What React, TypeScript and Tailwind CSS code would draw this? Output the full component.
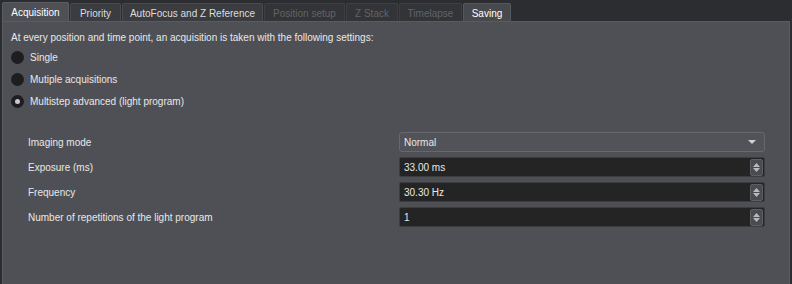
import React, { useState } from 'react';

const tabs = [
  { label: 'Acquisition', state: 'active', w: 'w-[67px]' },
  { label: 'Priority', state: 'normal', w: 'w-[51px]' },
  { label: 'AutoFocus and Z Reference', state: 'normal', w: 'w-[141px]' },
  { label: 'Position setup', state: 'disabled', w: 'w-[81px]' },
  { label: 'Z Stack', state: 'disabled', w: 'w-[52px]' },
  { label: 'Timelapse', state: 'disabled', w: 'w-[63px]' },
  { label: 'Saving', state: 'hover', w: 'w-[48px]' },
];

const modes = ['Single', 'Mutiple acquisitions', 'Multistep advanced (light program)'];

const SpinArrows: React.FC = () => (
  <div className="flex flex-col justify-center gap-[1px] w-[13px] h-[17px] bg-[#4a4b50] border border-[#5d5e63] rounded-[2px] items-center">
    <svg width="7" height="4" viewBox="0 0 7 4"><path d="M0 4 L3.5 0 L7 4 Z" fill="#b8b9bd" /></svg>
    <svg width="7" height="4" viewBox="0 0 7 4"><path d="M0 0 L3.5 4 L7 0 Z" fill="#b8b9bd" /></svg>
  </div>
);

const SpinBox: React.FC<{ value: string }> = ({ value }) => (
  <div className="flex items-center h-[20px] bg-[#242424] border border-[#3c3d40] rounded-[2px] pl-[4px] pr-[1px]">
    <span className="flex-1">{value}</span>
    <SpinArrows />
  </div>
);

const App: React.FC = () => {
  const [mode, setMode] = useState(2);

  return (
    <div
      className="w-[792px] h-[284px] bg-[#2c2d30] flex flex-col text-[10px] text-[#e8e8e8] overflow-hidden"
      style={{ fontFamily: '"Liberation Sans", Arial, sans-serif' }}
    >
      <div className="flex gap-[1px] pl-[2px] pt-[2px] h-[21px]">
        {tabs.map(t => (
          <div
            key={t.label}
            className={
              t.w +
              ' flex items-center justify-center whitespace-nowrap rounded-t-[2px] border border-b-0 ' +
              (t.state === 'active'
                ? 'bg-[#4f5055] border-[#5c5d62] text-white h-[20px]'
                : t.state === 'hover'
                ? 'bg-[#48494d] border-[#57585c] text-white h-[19px] mt-[1px]'
                : t.state === 'disabled'
                ? 'bg-[#333437] border-[#3e3f42] text-[#626367] h-[19px] mt-[1px]'
                : 'bg-[#3b3c40] border-[#494a4e] text-[#dcdcdc] h-[19px] mt-[1px]')
            }
          >
            {t.label}
          </div>
        ))}
      </div>
      <div className="flex-1 mx-[2px] bg-[#4f5055] border border-[#5a5b60] border-b-0 pl-[8px] pr-[24px]">
        <div className="mt-[8px]">
          At every position and time point, an acquisition is taken with the following settings:
        </div>
        <div className="flex flex-col mt-[5px] gap-[8px]">
          {modes.map((m, i) => (
            <label key={m} className="flex items-center gap-[6px] h-[14px] cursor-pointer" onClick={() => setMode(i)}>
              <span className="w-[13px] h-[13px] rounded-full bg-[#1e1e20] flex items-center justify-center">
                {mode === i && <span className="w-[5px] h-[5px] rounded-full bg-[#c9c9cb]" />}
              </span>
              <span>{m}</span>
            </label>
          ))}
        </div>
        <div className="grid grid-cols-[371px_1fr] mt-[24px] pl-[17px] gap-y-[5px] items-center">
          <span>Imaging mode</span>
          <div className="flex items-center h-[20px] bg-[#525358] border border-[#67686d] rounded-[3px] pl-[4px] pr-[8px]">
            <span className="flex-1">Normal</span>
            <svg width="8" height="4" viewBox="0 0 8 4"><path d="M0 0 L8 0 L4 4 Z" fill="#cfd0d3" /></svg>
          </div>
          <span>Exposure (ms)</span>
          <SpinBox value="33.00 ms" />
          <span>Frequency</span>
          <SpinBox value="30.30 Hz" />
          <span>Number of repetitions of the light program</span>
          <SpinBox value="1" />
        </div>
      </div>
    </div>
  );
};

export default App;
